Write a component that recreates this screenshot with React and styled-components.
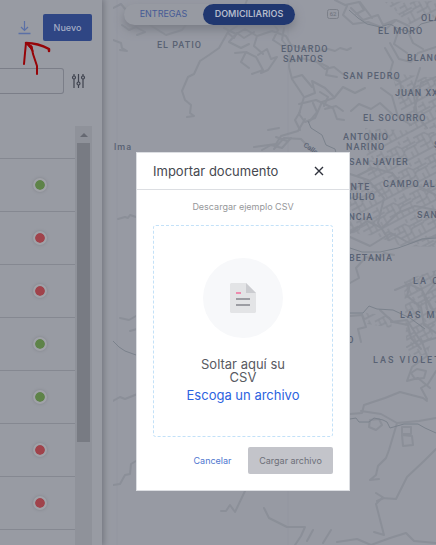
import React from "react";
import styled, { createGlobalStyle, css } from "styled-components";

const GlobalStyle = createGlobalStyle`
  *, *::before, *::after { box-sizing: border-box; }
  body {
    margin: 0;
    background: #989ba3;
    font-family: Inter, "Liberation Sans", sans-serif;
  }
  button { font-family: inherit; cursor: pointer; }
`;

const Page = styled.div`
  position: relative;
  display: flex;
  height: 100vh;
  overflow: hidden;
`;

/* ---------- side panel ---------- */

const SidePanel = styled.aside`
  display: flex;
  flex-direction: column;
  flex: none;
  width: 102px;
  margin-right: 11px;
  background: #989ba3;
  box-shadow: 1px 0 6px 1px #747780;
`;

const PanelToolbar = styled.header`
  display: flex;
  align-items: center;
  justify-content: flex-end;
  gap: 12px;
  padding: 14px 10px 0 0;
`;

const IconButton = styled.button`
  display: flex;
  padding: 0;
  border: 0;
  background: none;
  color: ${(p) => p.$color};
`;

const NewButton = styled.button`
  width: 49px;
  height: 27px;
  padding: 0;
  border: 0;
  border-radius: 2px;
  background: #2f4684;
  color: #a4adc5;
  font-size: 9px;
  font-weight: 500;
`;

const SearchRow = styled.div`
  display: flex;
  align-items: center;
  gap: 7px;
  padding: 27px 16px 32px 0;
`;

const SearchInput = styled.input`
  flex: 1;
  min-width: 0;
  height: 26px;
  border: 1px solid #7b7e88;
  border-left: 0;
  border-radius: 0 3px 3px 0;
  background: transparent;
`;

const ListArea = styled.div`
  display: flex;
  flex: 1;
  min-height: 0;
  padding-right: 10px;
`;

const List = styled.ul`
  flex: 1;
  margin: 0;
  padding: 0;
  list-style: none;
  overflow: hidden;
`;

const Row = styled.li`
  display: flex;
  align-items: center;
  justify-content: flex-end;
  height: ${(p) => (p.$head ? "33px" : "53px")};
  padding-right: 28px;
  border-bottom: 1px solid #858891;
`;

const StatusDot = styled.span`
  width: 14px;
  height: 14px;
  border: 2px solid #a0a2a8;
  border-radius: 50%;
  background: ${(p) => (p.$active ? "#5e8348" : "#a0434b")};
  background-clip: padding-box;
  box-shadow: 0 0 3px #80838b;
`;

const ScrollTrack = styled.div`
  display: flex;
  flex-direction: column;
  align-items: center;
  width: 17px;
  background: #8f929a;
`;

const ScrollCap = styled.div`
  display: flex;
  align-items: center;
  justify-content: center;
  width: 17px;
  height: 17px;
`;

const ScrollThumb = styled.div`
  width: 13px;
  height: 299px;
  background: #787b83;
`;

/* ---------- map ---------- */

const MapArea = styled.main`
  position: relative;
  flex: 1;
  min-width: 0;
  overflow: hidden;
`;

const MapDrawing = styled.svg`
  display: block;
  width: 100%;
  height: 100%;
`;

const MapLabel = styled.text`
  fill: #596273;
  font-family: Roboto, sans-serif;
  font-size: ${(p) => (p.$small ? "7px" : "9px")};
  font-weight: 500;
  letter-spacing: ${(p) => (p.$wide ? "2px" : p.$small ? "0" : "1px")};
`;

const Switcher = styled.nav`
  position: absolute;
  top: 4px;
  left: 11px;
  display: flex;
  height: 21px;
  border-radius: 11px;
  background: #979aa2;
  box-shadow: 0 5px 10px #7b7e87;
`;

const SwitchTab = styled.button`
  width: ${(p) => (p.$active ? "92px" : "79px")};
  padding: 0 0 3px;
  border: 0;
  border-radius: 11px;
  background: none;
  color: #465a96;
  font-size: 9px;
  ${(p) =>
    p.$active &&
    css`
      background: #203770;
      color: #b3bacb;
      font-weight: 600;
    `}
`;

/* ---------- dialog ---------- */

const Layer = styled.div`
  position: absolute;
  inset: 0;
  padding: 152px 86px 0 136px;
`;

const Dialog = styled.section`
  border: 1px solid #dcdee2;
  background: #fff;
`;

const DialogHeader = styled.header`
  display: flex;
  align-items: center;
  justify-content: space-between;
  height: 37px;
  padding: 0 25px 0 16px;
  border-bottom: 1px solid #dcdee2;
`;

const DialogTitle = styled.h2`
  margin: 0;
  color: #46484f;
  font-size: 13px;
  font-weight: 400;
`;

const DialogBody = styled.div`
  display: flex;
  flex-direction: column;
  padding: 10px 16px 16px;
`;

const SampleLink = styled.a`
  align-self: center;
  color: #96979a;
  font-size: 9px;
  line-height: 14px;
  text-decoration: none;
`;

const DropZone = styled.div`
  display: flex;
  flex-direction: column;
  align-items: center;
  height: 212px;
  margin: 11px 0 10px;
  padding: 32px 30px 0;
  border: 1px dashed #c3e1f8;
  border-radius: 3px;
`;

const DocCircle = styled.div`
  display: flex;
  align-items: center;
  justify-content: center;
  flex: none;
  width: 80px;
  height: 80px;
  border-radius: 50%;
  background: #f7f8fa;
`;

const DropText = styled.p`
  width: 100px;
  margin: 20px 0 3px;
  color: #585a62;
  font-size: 13px;
  line-height: 13px;
  text-align: center;
`;

const BrowseButton = styled.button`
  padding: 0;
  border: 0;
  background: none;
  color: #2c63e0;
  font-size: 13px;
  line-height: 16px;
  white-space: nowrap;
`;

const Actions = styled.footer`
  display: flex;
  justify-content: flex-end;
`;

const ActionButton = styled.button`
  width: ${(p) => (p.$filled ? "85px" : "71px")};
  height: 27px;
  padding: 0;
  border: 0;
  border-radius: 2px;
  background: ${(p) => (p.$filled ? "#c3c4ca" : "none")};
  color: ${(p) => (p.$filled ? "#6d6f78" : "#4f77cf")};
  font-size: 9px;
`;

const Annotation = styled.svg`
  position: absolute;
  top: 38px;
  left: 20px;
`;

/* ---------- data ---------- */

const drivers = [true, false, false, true, true, false, false];

const labels = [
  [157, 48, "EL PATIO"],
  [281, 52, "EDUARDO"],
  [283, 62, "SANTOS"],
  [378, 34, "EL MORO"],
  [421, 21, "OLAYA"],
  [407, 61, "BLANCO"],
  [343, 79, "SAN PEDRO"],
  [395, 96, "JUAN XXIII"],
  [363, 121, "EL SOCORRO"],
  [343, 140, "ANTONIO"],
  [346, 150, "NARINO"],
  [434, 148, "SAN"],
  [349, 165, "SAN JAVIER"],
  [383, 187, "CAMPO ALEGRE"],
  [334, 190, "VEINTE"],
  [330, 200, "DE JULIO"],
  [417, 218, "SANTA"],
  [317, 220, "FLORENCIA"],
  [349, 261, "BETANIA"],
  [413, 284, "LA COLINA", true],
  [400, 318, "LAS MERCEDES", true],
  [320, 343, "PRADO"],
  [373, 363, "LAS VIOLETAS", true],
];

const roads = [
  "M113 8l8-4 5 6 12-5M113 40l8 3 1 5 5 3-7-1M122 25l7 5 7-3 9 5-8 3M150 25l16 10 16-5 6-8 M166 5l14 6",
  "M247 0l-10 26-9 6-9 16-10 7-9 6-6 13-6 3-6 14 3 9 6 5-1 8 4 3-7 1 M228 33l6 5 3-5 7 5 10-6",
  "M235 53l11-1 10 5 7 13-11 4 M246 52l-5 10 8 6 M258 55l9-6 4 10 6-2-9 13-7 3",
  "M224 28l12 6 9-5 12 7 15-5 14 5 5 9 10 3 12-1M236 34l-7 8 12 6 8-4M257 36l-3 10 9 8M270 20l8 10-5 10 14 9",
  "M284 28l-2 12 8 10-1 17 3 12 12 18-5 17 6 8 10-4 7-16 12-4 9-11 12 6 10-5",
  "M290 62l11-4 16 4 8 7 9-2 10 8M299 104l17-4 17 8 4 11 7 1 M305 97l10-4-3-12 13 7 8 8M292 78l10-3 10 12",
  "M305 119l-7 12-17 5-5 8-22 3 M274 149l10-11 17 1 12 13M313 103l4 9-8 10M320 92l8 5-4 9",
  "M318 51l10-2 7 2 5-3 7 2 4-2M320 63l8 4-2 8 11 2M325 109l11-3 7 5",
  "M335 0l12 6-4 9 10 9 15-2 18 7 10-9 13 6M345 5l14-3 5 8-8 4M351 8l12 12 15-5 5 10 12-5M360 2l12 16",
  "M385 48l8 14-4 14 11 6 3 14M390 43l9 16 12 3 7-9 18-6M398 32l-4 12 13 9M407 29l6 14 10 6",
  "M381 88l11 8 6 21 13 8M351 111l8-7 12 5 9-6 12 11M420 68l-7 22 4 25 10 13M436 77l-15 6-7 28",
  "M350 174l18 6 16 18-6 25 11 17M357 176l16-8 19 5 13 15 11-3 20 10",
  "M350 233l17-12 15 7 16-15 17-7 21 4M350 237l20 9 21-13 18 10 27-7",
  "M350 283l9-5-3-10 10-11 12 3 6-7 10 2M395 290l14-6 13 6 9 18 5 4",
  "M350 316l12-1 4 12-8 2 3 13M380 310l13 12 15 3 3 13 10 11M436 282l-11 14 2 13",
  "M410 284l-3 12 14 11 3 18 12 8M391 322l16-2 14 22 15-4M407 347l14-8 6 17-15 11-5 14 11-3 12 10",
  "M350 414l12-1 2-8 21-7 15-6 23 6 4 3M427 399l-6-11 7-4 8-13M361 411l20 3 16 9 22-2 17-3M397 423l-8 27-3 8-8 8-2 9-6 5 9-1",
  "M436 449l-12 12-17 16-11 22-14-1-6 6 8 31-10-3M376 493l8 5-7 3M337 542l20-3 14 6 19-7 16-5 8 8 22 2",
  "M264 508l5 10 18 9 18 0-4 9-6 9M313 530l-6 11M331 530l-8 13M221 511l5 0 4-6 5 7 10-21",
  "M113 401l7-4 5 2 15-6M113 485l7-1 5-9 5-1 1-10 5-3M118 219l7-2 3 1 2-3 6 2M120 318l9 2 7-4M130 331l7-2",
  "M262 150l9-5 11 3 9-10M300 130l-5-10 5-8M276 137l11 4M268 130l11-2",
  "M411 373l6-4 9 2-2 7-9 1zM402 427h9v7h-9zM402 435l10 1 1 9-10 1zM370 420l9-1 3 6-6 5-7-3z",
];

const creeks = [
  "M308 121l3 7 11 7 4 10 9 4 2 8",
  "M113 341l6 6 6 4 11 4",
  "M350 419l6-1 3 4 10 0 5-4 9 2 4 2 3 6 14-4 14 0 7 4 11 5",
  "M350 248l12 4 18 0 18-4 14-5 10-4 14-1",
  "M350 313l13 0 6-7 8 3 16 1 17 8 15 11",
  "M349 10l9 8 9 6 13 3 10-3 9 5 13 3 9-8 15-4",
];

const blocks = [
  "M392 73l44 5v50l-25 4-10-22z",
  "M365 128l71 4v115l-35-1-26-10-25-3v-50l18-5z",
  "M404 280l32-10v50l-8 34-18 4-4-20z",
  "M385 2l51-1v16l-26 8z",
  "M360 312l30 4 2 12-25-4z",
];

/* ---------- pieces ---------- */

function MapView() {
  return (
    <MapArea>
      <MapDrawing viewBox="113 0 323 545" preserveAspectRatio="xMinYMin slice" aria-label="Mapa">
        <defs>
          <pattern id="streets" width="30" height="24" patternUnits="userSpaceOnUse" patternTransform="rotate(-28)">
            <path
              d="M0 4h12l3 4h15M0 10h10M2 15h11l4-4h13M0 21h30M4 4v6M9 4v17M15 8v13M20 8v3M25 0v8M22 15v6M27 11v10M15 0v4M19 3h6"
              fill="none"
              stroke="#8a8e97"
              strokeWidth="1.3"
            />
          </pattern>
        </defs>
        <rect x="113" width="323" height="545" fill="#979aa3" />
        <path d="M117 0v545M288 0v545" stroke="#9295a0" strokeWidth="1" opacity=".5" />
        {blocks.map((d) => (
          <path key={d} d={d} fill="url(#streets)" />
        ))}
        <g fill="none" stroke="#8b8f98" strokeWidth="2" strokeLinejoin="round" strokeLinecap="round">
          {roads.map((d) => (
            <path key={d} d={d} />
          ))}
        </g>
        <g fill="none" stroke="#7b828c" strokeWidth="1">
          {creeks.map((d) => (
            <path key={d} d={d} />
          ))}
        </g>
        <rect x="327.5" y="9.5" width="11" height="9" rx="2" fill="#979aa3" stroke="#7c8089" />
        <text x="333" y="16" textAnchor="middle" fontFamily="Roboto, sans-serif" fontSize="6" fill="#6c707a">
          62
        </text>
        {labels.map(([x, y, name, wide]) => (
          <MapLabel key={name} x={x} y={y} $wide={wide}>
            {name}
          </MapLabel>
        ))}
        <MapLabel x="114" y="150">lma</MapLabel>
        <MapLabel $small transform="translate(303 146) rotate(35)">Calle 4</MapLabel>
      </MapDrawing>
      <Switcher aria-label="Vista">
        <SwitchTab>ENTREGAS</SwitchTab>
        <SwitchTab $active>DOMICILIARIOS</SwitchTab>
      </Switcher>
    </MapArea>
  );
}

function DriversPanel() {
  return (
    <SidePanel>
      <PanelToolbar>
        <IconButton $color="#5b70a6" aria-label="Importar">
          <svg width="13" height="15" viewBox="0 0 13 15" fill="none" stroke="currentColor">
            <path d="M6.5 1v9M3 7l3.5 3.5L10 7" strokeWidth="1.2" />
            <path d="M0.5 13.5h12" strokeWidth="1.5" />
          </svg>
        </IconButton>
        <NewButton>Nuevo</NewButton>
      </PanelToolbar>
      <SearchRow>
        <SearchInput aria-label="Buscar" />
        <IconButton $color="#3f434f" aria-label="Filtros">
          <svg width="15" height="16" viewBox="0 0 15 16" fill="none" stroke="currentColor" strokeWidth="1.2">
            <path d="M3 1v2M3 6v9M7.5 1v8M7.5 12v3M12 1v2M12 6v9" />
            <circle cx="3" cy="4.5" r="1.5" />
            <circle cx="7.5" cy="10.5" r="1.5" />
            <circle cx="12" cy="4.5" r="1.5" />
          </svg>
        </IconButton>
      </SearchRow>
      <ListArea>
        <List>
          <Row $head />
          {drivers.map((active, i) => (
            <Row key={i}>
              <StatusDot $active={active} />
            </Row>
          ))}
        </List>
        <ScrollTrack>
          <ScrollCap>
            <svg width="8" height="4" viewBox="0 0 8 4">
              <path d="M4 0l4 4H0z" fill="#666972" />
            </svg>
          </ScrollCap>
          <ScrollThumb />
        </ScrollTrack>
      </ListArea>
    </SidePanel>
  );
}

function ImportDialog() {
  return (
    <Layer>
      <Dialog role="dialog" aria-labelledby="import-title">
        <DialogHeader>
          <DialogTitle id="import-title">Importar documento</DialogTitle>
          <IconButton $color="#2f323c" aria-label="Cerrar">
            <svg width="10" height="10" viewBox="0 0 10 10" stroke="currentColor" strokeWidth="1.4">
              <path d="M1 1l8 8M9 1l-8 8" />
            </svg>
          </IconButton>
        </DialogHeader>
        <DialogBody>
          <SampleLink href="#ejemplo">Descargar ejemplo CSV</SampleLink>
          <DropZone>
            <DocCircle>
              <svg width="26" height="30" viewBox="0 0 26 30">
                <path d="M1 0h15l10 10v19l-1 1H1l-1-1V1z" fill="#e3e4e6" />
                <path d="M16 0l10 10H16z" fill="#cbccd0" />
                <path d="M6 10h5" stroke="#ee8bae" strokeWidth="2" />
                <path d="M6 16h14M6 22h14" stroke="#9c9da3" strokeWidth="2" />
              </svg>
            </DocCircle>
            <DropText>Soltar aquí su CSV</DropText>
            <BrowseButton>Escoga un archivo</BrowseButton>
          </DropZone>
          <Actions>
            <ActionButton>Cancelar</ActionButton>
            <ActionButton $filled>Cargar archivo</ActionButton>
          </Actions>
        </DialogBody>
      </Dialog>
    </Layer>
  );
}

export default function App() {
  return (
    <>
      <GlobalStyle />
      <Page>
        <DriversPanel />
        <MapView />
        <Annotation width="32" height="40" viewBox="20 38 32 40" fill="none" stroke="#960408" strokeLinecap="round" strokeLinejoin="round" aria-hidden="true">
          <path d="M26 43q12 0 23 6v2" strokeWidth="2.5" />
          <path d="M26 43l-1 10-1 11" strokeWidth="2" />
          <path d="M26 43q6 3 7 11l4 12v8" strokeWidth="2" />
          <path d="M26 43l6 3 1 5z" fill="#960408" strokeWidth="1" />
        </Annotation>
        <ImportDialog />
      </Page>
    </>
  );
}
